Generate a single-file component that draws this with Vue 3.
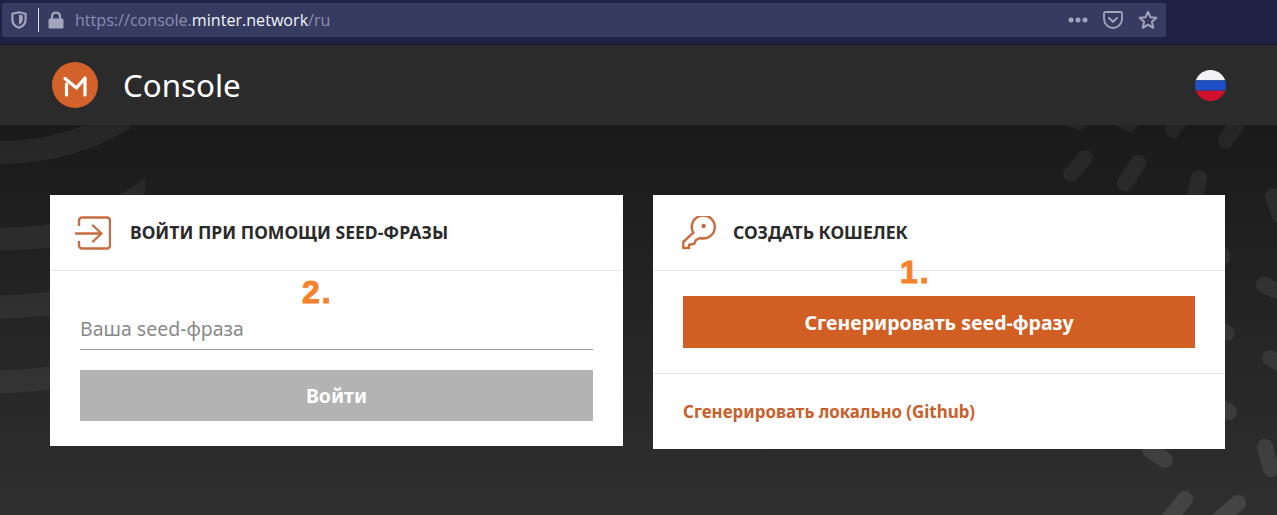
<template>
  <div class="page">
    <div class="browser-bar">
      <div class="url-field">
        <svg class="shield" width="16" height="18" viewBox="0 0 16 18">
          <path d="M8 1.2 L14.6 2.8 V8.5 C14.6 12.5 11.5 15.6 8 16.8 C4.5 15.6 1.4 12.5 1.4 8.5 V2.8 Z" fill="none" stroke="#a3a5bd" stroke-width="2.2" stroke-linejoin="round" />
          <path d="M8 3.5 L11.8 4.5 V8.5 C11.8 10.8 10 12.8 8 13.8 Z" fill="#a3a5bd" />
        </svg>
        <span class="sep"></span>
        <svg class="lock" width="16" height="18" viewBox="0 0 16 18">
          <path d="M4 8 V5.5 C4 3 5.8 1.6 8 1.6 C10.2 1.6 12 3 12 5.5 V8" fill="none" stroke="#a3a5bd" stroke-width="2.2" />
          <rect x="0.5" y="7.5" width="15" height="10" rx="1.5" fill="#a3a5bd" />
        </svg>
        <span class="url">https://console.<b>minter.network</b>/ru</span>
        <div class="url-actions">
          <svg width="20" height="6" viewBox="0 0 20 6">
            <circle cx="3" cy="3" r="2.5" fill="#a3a5bd" />
            <circle cx="10" cy="3" r="2.5" fill="#a3a5bd" />
            <circle cx="17" cy="3" r="2.5" fill="#a3a5bd" />
          </svg>
          <svg width="20" height="18" viewBox="0 0 20 18">
            <path d="M2.5 1 H17.5 A1.5 1.5 0 0 1 19 2.5 V8 C19 13 14.5 17 10 17 C5.5 17 1 13 1 8 V2.5 A1.5 1.5 0 0 1 2.5 1 Z" fill="none" stroke="#a3a5bd" stroke-width="1.8" />
            <path d="M6 7 L10 10.8 L14 7" fill="none" stroke="#a3a5bd" stroke-width="2" stroke-linecap="round" stroke-linejoin="round" />
          </svg>
          <svg width="20" height="20" viewBox="0 0 20 20">
            <path d="M10 1.8 L12.4 7.2 L18.4 7.8 L13.9 11.8 L15.2 17.8 L10 14.7 L4.8 17.8 L6.1 11.8 L1.6 7.8 L7.6 7.2 Z" fill="none" stroke="#a3a5bd" stroke-width="2" stroke-linejoin="round" />
          </svg>
        </div>
      </div>
    </div>

    <header class="top-header">
      <div class="brand">
        <svg class="logo" width="46" height="46" viewBox="0 0 46 46">
          <circle cx="23" cy="23" r="23" fill="#d2622a" />
          <path d="M13 16.5 L24.5 26 L33 16 V33 M14.5 22 V33" fill="none" stroke="#fff" stroke-width="3.2" stroke-linecap="round" stroke-linejoin="round" />
        </svg>
        <span class="brand-name">Console</span>
      </div>
      <svg class="flag" width="31" height="31" viewBox="0 0 30 30">
        <clipPath id="flag-clip"><circle cx="15" cy="15" r="15" /></clipPath>
        <g clip-path="url(#flag-clip)">
          <rect width="30" height="10" fill="#f1f1f4" />
          <rect y="10" width="30" height="10" fill="#1e4fc4" />
          <rect y="20" width="30" height="10" fill="#d0102c" />
        </g>
      </svg>
    </header>

    <main class="content">
      <svg class="pattern" width="1277" height="390" viewBox="0 125 1277 390">
        <g fill="none" stroke="#fff" stroke-opacity="0.055" stroke-width="23">
          <path d="M-10 153 Q70 153 125 118" />
          <path d="M-10 239 Q35 239 62 234" />
          <path d="M-10 307 Q25 307 62 302" />
          <path d="M-10 382 Q25 382 62 376" />
        </g>
        <path d="M120 195 L145 178 V196 H120 Z" fill="#fff" fill-opacity="0.055" />
        <g stroke="#fff" stroke-width="16" stroke-linecap="round">
          <line
            v-for="(p, i) in pills"
            :key="i"
            :x1="p[0]"
            :y1="p[1]"
            :x2="p[2]"
            :y2="p[3]"
            :stroke-opacity="pillOpacity(p[1])"
          />
        </g>
      </svg>

      <section class="card card-login">
        <div class="card-head">
          <svg class="card-icon" width="36" height="34" viewBox="0 0 36 34">
            <path d="M4 10 V4.5 A3 3 0 0 1 7 1.5 H32 A3 3 0 0 1 35 4.5 V29.5 A3 3 0 0 1 32 32.5 H7 A3 3 0 0 1 4 29.5 V25" fill="none" stroke="#c76c41" stroke-width="2.4" />
            <path d="M1 17.5 H26 M18 9.5 L26.5 17.5 L18 25.5" fill="none" stroke="#c76c41" stroke-width="2.4" stroke-linecap="round" stroke-linejoin="round" />
          </svg>
          <h2 class="card-title">ВОЙТИ ПРИ ПОМОЩИ SEED-ФРАЗЫ</h2>
        </div>
        <div class="card-body">
          <div class="field">Ваша seed-фраза</div>
          <div class="btn btn-muted">Войти</div>
        </div>
        <span class="mark mark-two">2.</span>
      </section>

      <section class="card card-create">
        <div class="card-head">
          <svg class="card-icon key" width="36" height="34" viewBox="0 0 36 34">
            <path d="M12.3 16.7 L2.3 26 V32 H8 V28.7 L13.3 27.7 L14.7 24.3 L19 22 A11.5 11.5 0 1 0 12.3 16.7 Z" fill="none" stroke="#c76c41" stroke-width="2.4" stroke-linejoin="round" />
            <circle cx="22.6" cy="10" r="2.2" fill="#c76c41" />
          </svg>
          <h2 class="card-title">СОЗДАТЬ КОШЕЛЕК</h2>
        </div>
        <div class="card-body card-body-create">
          <div class="btn btn-primary">Сгенерировать seed-фразу</div>
        </div>
        <div class="card-foot">
          <span class="link">Сгенерировать локально (Github)</span>
        </div>
        <span class="mark mark-one">1.</span>
      </section>
    </main>
  </div>
</template>

<script setup>
// x1, y1, x2, y2 of each pill in the background pattern
const pills = [
  [1071, 174, 1085, 158],
  [1125, 183, 1138, 163],
  [1194, 200, 1199, 178],
  [1073, 120, 1080, 122],
  [1122, 120, 1130, 124],
  [1173, 130, 1181, 118],
  [1226, 140, 1238, 122],
  [1273, 196, 1280, 216],
  [1264, 285, 1284, 294],
  [1270, 358, 1284, 366],
  [1265, 447, 1271, 469],
  [1150, 450, 1165, 460],
  [1168, 520, 1185, 499],
  [1218, 520, 1238, 503],
  [1222, 255, 1222, 258],
  [1222, 330, 1227, 333],
  [1222, 408, 1229, 412]
]

// the pattern gets a little stronger towards the bottom of the page
const pillOpacity = (y) => (0.05 + ((y - 125) / 390) * 0.05).toFixed(3)
</script>

<style>
html, body {
  margin: 0;
  background: #2e2e2e;
}
</style>

<style scoped>
.page {
  width: 1277px;
  height: 515px;
  overflow: hidden;
  font-family: "Noto Sans", "Open Sans", sans-serif;
}

.browser-bar {
  height: 45px;
  box-sizing: border-box;
  padding: 3px 111px 7px 2px;
  background: #1f2244;
  border-bottom: 1px solid #14152b;
}

.url-field {
  height: 34px;
  display: flex;
  align-items: center;
  padding: 0 8px 0 9px;
  background: #363b62;
  border-radius: 2px;
}

.sep {
  width: 1px;
  height: 24px;
  margin: 0 9px 0 11px;
  background: #d8d9e6;
}

.url {
  margin-left: 11px;
  font-family: "Open Sans", sans-serif;
  font-size: 16.1px;
  color: #8b8eae;
}

.url b {
  font-weight: 400;
  color: #f2f3f8;
}

.url-actions {
  margin-left: auto;
  display: flex;
  align-items: center;
  gap: 15px;
}

.top-header {
  height: 80px;
  box-sizing: border-box;
  display: flex;
  align-items: center;
  justify-content: space-between;
  padding: 0 51px 0 52px;
  background: #2b2b2b;
}

.brand {
  display: flex;
  align-items: center;
  gap: 25px;
}

.brand-name {
  font-size: 31.3px;
  color: #fff;
}

.content {
  position: relative;
  height: 390px;
  box-sizing: border-box;
  display: grid;
  grid-template-columns: 573px 572px;
  column-gap: 30px;
  align-items: start;
  padding: 70px 0 0 50px;
  background: linear-gradient(180deg, #1a1a1a 0%, #2f2f2f 100%);
}

.pattern {
  position: absolute;
  top: 0;
  left: 0;
}

.card {
  position: relative;
  background: #fff;
  color: #2a2a2a;
}

.card-head {
  height: 76px;
  box-sizing: border-box;
  display: flex;
  align-items: center;
  padding: 0 25px;
  border-bottom: 1px solid #e6e6e6;
}

.card-icon {
  flex: none;
  margin-right: 19px;
}

.key {
  margin: 0 16px 0 3px;
}

.card-title {
  margin: 0;
  font-size: 17.6px;
  font-weight: 700;
  line-height: 1;
}

.card-body {
  padding: 25px 30px;
}

.field {
  height: 54px;
  box-sizing: border-box;
  padding-top: 21px;
  margin-bottom: 20px;
  font-size: 19.5px;
  line-height: 24px;
  color: #8a8a8a;
  border-bottom: 1px solid #9a9a9a;
}

.btn {
  display: flex;
  align-items: center;
  justify-content: center;
  font-size: 19.5px;
  font-weight: 700;
  color: #fff;
}

.btn-muted {
  height: 51px;
  background: #b3b3b3;
}

.btn-primary {
  height: 52px;
  background: #d15f24;
}

.card-foot {
  height: 76px;
  box-sizing: border-box;
  display: flex;
  align-items: center;
  padding: 0 30px;
  border-top: 1px solid #e6e6e6;
}

.link {
  font-size: 16.9px;
  font-weight: 700;
  color: #c9602c;
}

.mark {
  position: absolute;
  font-family: "Liberation Sans", sans-serif;
  font-size: 32px;
  font-weight: 700;
  line-height: 1;
  letter-spacing: 2px;
  color: #f5822a;
  -webkit-text-stroke: 1px #f5822a;
}

.mark-two {
  left: 252px;
  top: 81px;
}

.mark-one {
  left: 247px;
  top: 61px;
}
</style>
